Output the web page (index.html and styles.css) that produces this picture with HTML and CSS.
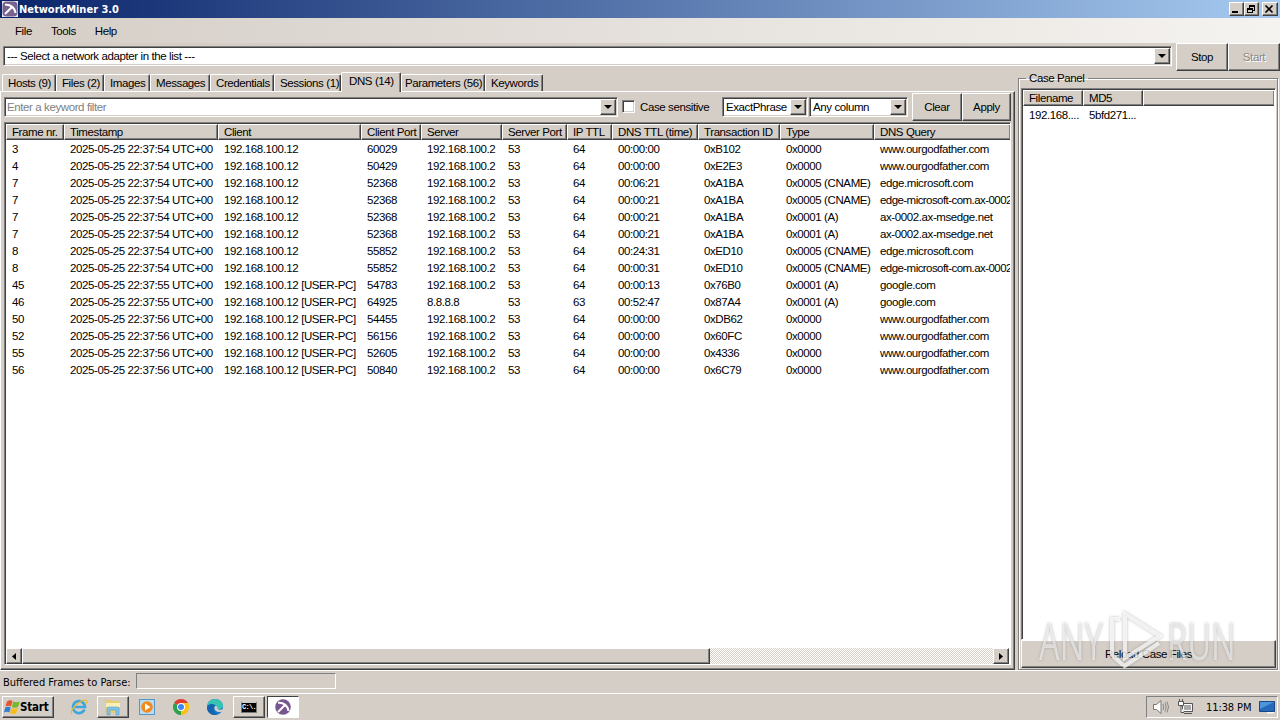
FILE: index.html
```
<!DOCTYPE html>
<html lang="en">
<head>
    <meta charset="UTF-8">
    <meta name="viewport" content="width=device-width, initial-scale=1.0">
    <title>NetworkMiner 3.0</title>
    <link rel="stylesheet" href="styles.css">
</head>
<body>
    <svg class="defs">
        <symbol id="miner" viewBox="0 0 16 16">
            <path d="M3 3.800C8 2.800 13 7 13.500 12" fill="none" stroke="#fff" stroke-width="2"/>
            <path d="M10.500 5.500L3 13" stroke="#fff" stroke-width="2"/>
        </symbol>
    </svg>
    <div class="titlebar">
        <svg class="app-icon" viewBox="0 0 16 16">
            <rect width="16" height="16" fill="#eeeaf4"/>
            <rect x=".5" y=".5" width="15" height="15" rx="4" fill="#77638f"/>
            <use href="#miner"/>
        </svg>
        <span class="title">NetworkMiner 3.0</span>
        <div class="window-buttons">
            <button><svg viewBox="0 0 12 10"><path d="M2 7h6v2H2z"/></svg></button>
            <button><svg viewBox="0 0 12 10"><path d="M4 1h6v6H8V6h1V3H5v1H4zM2 4h6v5H2zM3 6v2h4V6z" fill-rule="evenodd"/></svg></button>
            <button class="close"><svg viewBox="0 0 12 10"><path d="M2.500 1.500l7 7m0-7l-7 7" stroke="#000" stroke-width="1.700"/></svg></button>
        </div>
    </div>
    <div class="menubar">
        <span>File</span>
        <span>Tools</span>
        <span>Help</span>
    </div>
    <div class="adapter-row">
        <div class="combo"><span>--- Select a network adapter in the list ---</span><i class="drop"></i></div>
        <button class="btn">Stop</button>
        <button class="btn disabled">Start</button>
    </div>
    <div class="main">
        <div class="left">
            <div class="tabs">
                <div class="tab hosts">Hosts (9)</div>
                <div class="tab files">Files (2)</div>
                <div class="tab images">Images</div>
                <div class="tab messages">Messages</div>
                <div class="tab credentials">Credentials</div>
                <div class="tab sessions">Sessions (1)</div>
                <div class="tab dns active">DNS (14)</div>
                <div class="tab parameters">Parameters (56)</div>
                <div class="tab keywords">Keywords</div>
            </div>
            <div class="page">
                <div class="filter">
                    <div class="combo keyword"><span>Enter a keyword filter</span><i class="drop"></i></div>
                    <i class="checkbox"></i>
                    <span class="check-label">Case sensitive</span>
                    <div class="combo phrase"><span>ExactPhrase</span><i class="drop"></i></div>
                    <div class="combo column"><span>Any column</span><i class="drop"></i></div>
                    <button class="btn">Clear</button>
                    <button class="btn apply">Apply</button>
                </div>
                <div class="list">
                    <table>
                        <colgroup>
                            <col class="c-frame"><col class="c-time"><col class="c-client"><col class="c-cport">
                            <col class="c-server"><col class="c-sport"><col class="c-ttl"><col class="c-dnsttl">
                            <col class="c-trans"><col class="c-type"><col class="c-query">
                        </colgroup>
                        <thead>
                            <tr><th>Frame nr.</th><th>Timestamp</th><th>Client</th><th>Client Port</th><th>Server</th><th>Server Port</th><th>IP TTL</th><th>DNS TTL (time)</th><th>Transaction ID</th><th>Type</th><th>DNS Query</th></tr>
                        </thead>
                        <tbody id="rows"></tbody>
                    </table>
                    <div class="scrollbar">
                        <div class="arrow"><svg viewBox="0 0 4 7"><path d="M4 0v7L0 3.500z"/></svg></div>
                        <div class="thumb"></div>
                        <div class="track"></div>
                        <div class="arrow"><svg viewBox="0 0 4 7"><path d="M0 0v7l4-3.500z"/></svg></div>
                    </div>
                </div>
            </div>
        </div>
        <fieldset class="case-panel">
            <legend>Case Panel</legend>
            <div class="case-list">
                <div class="case-head"><span>Filename</span><span>MD5</span><span></span></div>
                <div class="case-row"><span>192.168....</span><span>5bfd271...</span></div>
            </div>
            <button class="btn reload">Reload Case Files</button>
        </fieldset>
        <div class="watermark">
            <span>ANY</span>
            <svg viewBox="0 0 62 64">
                <path d="M15 11H7v36l11 10M20 6v44l35-22zM18 59l36-24"/>
            </svg>
            <span>RUN</span>
        </div>
    </div>
    <div class="statusbar">
        <span>Buffered Frames to Parse:</span>
        <div class="progress"></div>
    </div>
    <div class="taskbar">
        <button class="start">
            <svg viewBox="0 0 16 16">
                <path d="M3 2.500q3-2 5.500-.5L7 7.500Q4.500 6 1.500 7.500z" fill="#e5562a"/>
                <path d="M9.300 2.500q3 1.500 6.500 0L14 8q-3 1.300-6.200 0z" fill="#76b82a"/>
                <path d="M1.200 8.500q3-1.500 5.500 0L5.300 13.500Q3 12 0 13.500z" fill="#2f7fd0"/>
                <path d="M7.500 9q3 1.500 6.200 0L12.200 14.500q-3 1.300-6.200-.2z" fill="#f6bd1b"/>
            </svg>
            <span>Start</span>
        </button>
        <div class="task ie">
            <svg viewBox="0 0 18 18">
                <path d="M14.500 11.500A6 6 0 1 1 15 9H5" fill="none" stroke="#3aa5df" stroke-width="2.600"/>
                <path d="M2 16C-1 12 12 0 16.500 2.500c1 .7.500 2-.5 3.500" fill="none" stroke="#e8b83a" stroke-width="1.200"/>
            </svg>
        </div>
        <div class="task raised">
            <svg viewBox="0 0 18 18">
                <path d="M1 2h6l1 1h8v12H1z" fill="#e9cd72"/>
                <path d="M2 5h14v4H2z" fill="#fbf0b6"/>
                <path d="M3 17V11q0-2 2-2h8q2 0 2 2v6h-3v-5H6v5z" fill="#7fc3ea" stroke="#559dc9" stroke-width=".6"/>
            </svg>
        </div>
        <div class="task">
            <svg viewBox="0 0 18 18">
                <rect x="1.500" y="1.500" width="15" height="15" fill="#b8dcf2" stroke="#5797c8"/>
                <circle cx="9" cy="9" r="5.800" fill="#f28a1c"/>
                <path d="M7 5.500v7L12.500 9z" fill="#fff"/>
            </svg>
        </div>
        <div class="task">
            <svg viewBox="0 0 18 18">
                <path d="M9 9L2.070 5A8 8 0 0 1 15.930 5z" fill="#e33b2e"/>
                <path d="M9 9l6.930-4A8 8 0 0 1 9 17z" fill="#fbc116"/>
                <path d="M9 9v8A8 8 0 0 1 2.070 5z" fill="#2da14c"/>
                <path d="M9 5h7A8 8 0 0 1 9 17l3.500-6z" fill="#fbc116"/>
                <circle cx="9" cy="9" r="4" fill="#fff"/>
                <circle cx="9" cy="9" r="3" fill="#4285f4"/>
            </svg>
        </div>
        <div class="task">
            <svg viewBox="0 0 18 18">
                <circle cx="9" cy="9" r="8" fill="#1479c9"/>
                <path d="M1.200 8C2 3 5.500 1 9 1c5 0 8 3.500 8 6.500 0 3-3 4-5.500 3.500C11 6.500 5 4.500 1.200 8z" fill="#37c2b1"/>
                <path d="M8.500 8.500C7.500 12.500 11 15 15.500 13.700c1-.3 3-2.500 2-2.700-3 1-6.400.9-6-.7 0-2-1.500-2.800-3-1.800z" fill="#d5cec7"/>
                <path d="M1.200 8.500C4 5 8 5.500 9.500 8 6.500 8.500 6.500 13.500 11 16.700 4 18 .3 13 1.200 8.500z" fill="#1664b0"/>
            </svg>
        </div>
        <div class="task raised cmd"><span>C:\.</span></div>
        <div class="task pressed">
            <svg viewBox="0 0 16 16"><circle cx="8" cy="8" r="7.800" fill="#77568f"/><use href="#miner"/></svg>
        </div>
        <div class="tray">
            <svg class="speaker" viewBox="0 0 18 16">
                <path d="M1.500 5.500h3L9 1.500v13l-4.500-4h-3z" fill="#fff" stroke="#777"/>
                <path d="M11 5q1.500 3 0 6M13 3.500q2.500 4.500 0 9M15 2.500q3 5.500 0 11" fill="none" stroke="#888"/>
            </svg>
            <svg class="network" viewBox="0 0 17 16">
                <path d="M5.500 4.500h10v8h-10zM7 14.500h8" fill="#a9a9a9" stroke="#555"/>
                <path d="M6.500 5.500h8v6h-8z" fill="none" stroke="#fff"/>
                <path d="M1.500 2.500h5v4h-5zM4 7v6.500h3M2.500 0v2m3-2v2" fill="#fff" stroke="#555"/>
            </svg>
            <span>11:38 PM</span>
            <svg class="desktop" viewBox="0 0 16 14">
                <path d="M.5 1.500h15v10H.5z" fill="#2768bb" stroke="#164889"/>
                <path d="M1 2h14L1 9z" fill="#4d94da"/>
                <path d="M8 12h7v1.500H8z" fill="#f4f7fa"/>
            </svg>
        </div>
    </div>
    <script>
        const frames = [
            ['3', '54', '', '60029', '192.168.100.2', '64', '00:00:00', '0xB102', '0x0000', 'www.ourgodfather.com'],
            ['4', '54', '', '50429', '192.168.100.2', '64', '00:00:00', '0xE2E3', '0x0000', 'www.ourgodfather.com'],
            ['7', '54', '', '52368', '192.168.100.2', '64', '00:06:21', '0xA1BA', '0x0005 (CNAME)', 'edge.microsoft.com'],
            ['7', '54', '', '52368', '192.168.100.2', '64', '00:00:21', '0xA1BA', '0x0005 (CNAME)', 'edge-microsoft-com.ax-0002'],
            ['7', '54', '', '52368', '192.168.100.2', '64', '00:00:21', '0xA1BA', '0x0001 (A)', 'ax-0002.ax-msedge.net'],
            ['7', '54', '', '52368', '192.168.100.2', '64', '00:00:21', '0xA1BA', '0x0001 (A)', 'ax-0002.ax-msedge.net'],
            ['8', '54', '', '55852', '192.168.100.2', '64', '00:24:31', '0xED10', '0x0005 (CNAME)', 'edge.microsoft.com'],
            ['8', '54', '', '55852', '192.168.100.2', '64', '00:00:31', '0xED10', '0x0005 (CNAME)', 'edge-microsoft-com.ax-0002'],
            ['45', '55', ' [USER-PC]', '54783', '192.168.100.2', '64', '00:00:13', '0x76B0', '0x0001 (A)', 'google.com'],
            ['46', '55', ' [USER-PC]', '64925', '8.8.8.8', '63', '00:52:47', '0x87A4', '0x0001 (A)', 'google.com'],
            ['50', '56', ' [USER-PC]', '54455', '192.168.100.2', '64', '00:00:00', '0xDB62', '0x0000', 'www.ourgodfather.com'],
            ['52', '56', ' [USER-PC]', '56156', '192.168.100.2', '64', '00:00:00', '0x60FC', '0x0000', 'www.ourgodfather.com'],
            ['55', '56', ' [USER-PC]', '52605', '192.168.100.2', '64', '00:00:00', '0x4336', '0x0000', 'www.ourgodfather.com'],
            ['56', '56', ' [USER-PC]', '50840', '192.168.100.2', '64', '00:00:00', '0x6C79', '0x0000', 'www.ourgodfather.com']
        ];

        document.getElementById('rows').innerHTML = frames.map(([nr, sec, host, port, server, ...rest]) => {
            const cells = [nr, `2025-05-25 22:37:${sec} UTC+00`, '192.168.100.12' + host, port, server, '53', ...rest];
            return '<tr>' + cells.map(cell => `<td${cell.startsWith('edge-') ? ' class="tight"' : ''}>${cell}</td>`).join('') + '</tr>';
        }).join('');
    </script>
</body>
</html>
```
FILE: styles.css
```
* {
    box-sizing: border-box;
}
body {
    margin: 0;
    width: 1280px;
    height: 720px;
    overflow: hidden;
    display: flex;
    flex-direction: column;
    background: #d5cec7;
    color: #000;
    font-family: "Liberation Sans", Arial, sans-serif;
    font-size: 11.5px;
    letter-spacing: -0.4px;
    line-height: 17px;
    white-space: nowrap;
}
button {
    font: inherit;
    letter-spacing: inherit;
    color: inherit;
    padding: 0;
    margin: 0;
}
.defs {
    position: absolute;
    width: 0;
    height: 0;
}
.titlebar {
    height: 18px;
    flex: none;
    display: flex;
    align-items: center;
    padding: 0 2px;
    background: linear-gradient(90deg, #0a246a, #a6caf0);
}
.app-icon {
    width: 16px;
    height: 16px;
}
.title {
    flex: 1;
    margin-left: 1px;
    color: #fff;
    font: bold 11px "DejaVu Sans Condensed", "DejaVu Sans", sans-serif;
    letter-spacing: 0;
}
.window-buttons {
    display: flex;
}
.window-buttons button {
    width: 15px;
    height: 14px;
    background: #d5cec7;
    border: 1px solid;
    border-color: #fff #404040 #404040 #fff;
    box-shadow: inset -1px -1px #808080;
    display: flex;
}
.window-buttons .close {
    width: 16px;
    margin-left: 3px;
}
.window-buttons svg {
    width: 12px;
    height: 10px;
    margin: 1px 0 0;
}
.menubar {
    height: 25px;
    flex: none;
    display: flex;
    gap: 19px;
    padding: 5px 0 0 15px;
    background: linear-gradient(90deg, #d5cec7, #f5f3f0);
}
.adapter-row {
    height: 28px;
    flex: none;
    display: flex;
    padding-left: 3px;
}
.adapter-row .combo {
    width: 1169px;
    margin: 3px 4px 0 0;
}
.adapter-row .btn {
    width: 52px;
}
.combo {
    height: 20px;
    background: #fff;
    border: 1px solid;
    border-color: #808080 #fff #fff #808080;
    box-shadow: inset 1px 1px #404040, inset -1px -1px #d5cec7;
    display: flex;
    padding: 1px;
    flex: none;
}
.combo span {
    flex: 1;
    padding-left: 2px;
    line-height: 17px;
}
.drop {
    width: 16px;
    height: 16px;
    background: #d5cec7;
    border: 1px solid;
    border-color: #fff #404040 #404040 #fff;
    box-shadow: inset -1px -1px #808080;
    display: flex;
    justify-content: center;
    align-items: center;
}
.drop::after {
    content: "";
    border: 4px solid transparent;
    border-top-color: #000;
    border-bottom: 0;
}
.btn {
    height: 28px;
    flex: none;
    background: #d5cec7;
    border: 1px solid;
    border-color: #fff #404040 #404040 #fff;
    box-shadow: inset -1px -1px #808080;
}
.disabled {
    color: #8e8984;
    text-shadow: 1px 1px #fff;
}
.main {
    position: relative;
    height: 599px;
    flex: none;
    display: flex;
}
.left {
    width: 1015px;
    flex: none;
    display: flex;
    flex-direction: column;
    margin-right: 3px;
}
.tabs {
    height: 20px;
    flex: none;
    display: flex;
    align-items: flex-end;
    padding-left: 2px;
}
.tab {
    height: 17px;
    border: 1px solid;
    border-width: 1px 1px 0;
    border-color: #fff #404040 #fff #fff;
    box-shadow: inset -1px 0 #808080;
    border-radius: 2px 2px 0 0;
    padding-left: 5px;
}
.hosts { width: 54px; }
.files { width: 48px; }
.images { width: 46px; }
.messages { width: 60px; }
.credentials { width: 64px; }
.sessions { width: 67px; }
.dns { width: 60px; }
.parameters { width: 84px; }
.keywords { width: 58px; }
.tab.parameters {
    padding-left: 3px;
}
.tab.active {
    height: 20px;
    margin-bottom: -1px;
    background: #d5cec7;
    padding-left: 7px;
    z-index: 1;
}
.page {
    flex: 1;
    display: flex;
    flex-direction: column;
    border: 1px solid;
    border-color: #fff #404040 #404040 #fff;
    box-shadow: inset -1px -1px #808080;
    padding: 0 3px 4px;
}
.filter {
    height: 30px;
    flex: none;
    display: flex;
    padding-top: 1px;
}
.filter .combo {
    margin-top: 4px;
}
.keyword {
    width: 614px;
    color: #808080;
}
.combo.keyword span {
    padding-left: 1px;
}
.checkbox {
    width: 13px;
    height: 13px;
    margin: 7px 5px 0 4px;
    background: #fff;
    border: 1px solid;
    border-color: #808080 #fff #fff #808080;
    box-shadow: inset 1px 1px #404040, inset -1px -1px #d5cec7;
}
.check-label {
    width: 82px;
    padding-top: 6px;
}
.phrase {
    width: 86px;
    margin-right: 1px;
}
.column {
    width: 99px;
    margin-right: 4px;
}
.filter .btn {
    width: 50px;
}
.filter .apply {
    width: 49px;
}
.list {
    flex: 1;
    display: flex;
    flex-direction: column;
    justify-content: space-between;
    overflow: hidden;
    background: #fff;
    border: 1px solid;
    border-color: #808080 #fff #fff #808080;
    box-shadow: inset 1px 1px #404040;
    padding: 1px 1px 0;
}
table {
    width: 1005px;
    table-layout: fixed;
    border-collapse: separate;
    border-spacing: 0;
}
th, td {
    padding: 0 0 0 6px;
    text-align: left;
    font-weight: normal;
    overflow: hidden;
}
th {
    height: 16px;
    line-height: 14px;
    background: #d5cec7;
    border: 1px solid;
    border-color: #fff #404040 #404040 #fff;
    box-shadow: inset -1px -1px #808080;
    padding-left: 5px;
}
td {
    height: 17px;
    line-height: 17px;
}
tbody tr:first-child td {
    height: 18px;
    padding-top: 1px;
}
.tight {
    letter-spacing: -0.56px;
}
.c-frame { width: 58px; }
.c-time { width: 154px; }
.c-client { width: 143px; }
.c-cport { width: 60px; }
.c-server { width: 81px; }
.c-sport { width: 65px; }
.c-ttl { width: 45px; }
.c-dnsttl { width: 86px; }
.c-trans { width: 82px; }
.c-type { width: 94px; }
.scrollbar {
    height: 16px;
    display: flex;
}
.arrow {
    width: 16px;
    display: flex;
    justify-content: center;
    align-items: center;
}
.arrow svg {
    width: 4px;
    height: 7px;
}
.arrow, .thumb {
    background: #d5cec7;
    border: 1px solid;
    border-color: #fff #404040 #404040 #fff;
    box-shadow: inset -1px -1px #808080;
}
.thumb {
    width: 688px;
}
.track {
    flex: 1;
    background: repeating-conic-gradient(#d5cec7 0 25%, #fff 0 50%) 0 0 / 2px 2px;
}
.case-panel {
    width: 260px;
    min-width: 0;
    margin: 0;
    padding: 3px 1px 1px 2px;
    border: 1px solid #808080;
    box-shadow: 1px 1px #fff, inset 1px 1px #fff;
    display: flex;
    flex-direction: column;
}
.case-panel legend {
    margin-left: 5px;
    padding: 0 4px 0 3px;
    height: 14px;
    line-height: 14px;
}
.case-list {
    flex: 1;
    background: #fff;
    border: 1px solid;
    border-color: #808080 #fff #fff #808080;
    box-shadow: inset 1px 1px #404040;
    padding: 1px;
}
.case-head, .case-row {
    display: flex;
}
.case-head span, .case-row span {
    width: 60px;
    height: 17px;
    padding-left: 6px;
}
.case-head span {
    height: 16px;
    background: #d5cec7;
    border: 1px solid;
    border-color: #fff #404040 #404040 #fff;
    box-shadow: inset -1px -1px #808080;
    padding-left: 5px;
    line-height: 15px;
}
.case-head span:last-child {
    flex: 1;
    border-right: 0;
}
.case-row {
    padding-top: 1px;
}
.watermark {
    position: absolute;
    left: 1039px;
    top: 537px;
    display: flex;
    align-items: center;
    height: 64px;
    font: 52px/64px "Open Sans", sans-serif;
    letter-spacing: 0;
    color: rgba(255, 255, 255, 0.6);
    text-shadow: 0 0 3px rgba(110, 110, 110, 0.5);
}
.watermark span {
    width: 66px;
    transform: scaleX(0.63);
    transform-origin: 0 50%;
}
.watermark svg {
    width: 62px;
    height: 64px;
    fill: none;
    stroke: rgba(255, 255, 255, 0.75);
    stroke-width: 4;
    filter: drop-shadow(0 0 1.5px rgba(110, 110, 110, 0.6));
}
.statusbar {
    height: 23px;
    flex: none;
    border-top: 1px solid #fff;
    display: flex;
    padding: 2px 3px;
    font: 11px/19px "DejaVu Sans Condensed", "DejaVu Sans", sans-serif;
    letter-spacing: 0;
}
.statusbar span {
    width: 133px;
}
.progress {
    width: 200px;
    height: 16px;
    border: 1px solid;
    border-color: #808080 #fff #fff #808080;
}
.taskbar {
    height: 27px;
    flex: none;
    border-top: 1px solid #fff;
    display: flex;
    padding: 2px 2px 2px;
}
.start {
    width: 52px;
    height: 22px;
    background: #d5cec7;
    border: 1px solid;
    border-color: #fff #404040 #404040 #fff;
    box-shadow: inset -1px -1px #808080;
    display: flex;
    align-items: center;
    font: bold 11.5px "DejaVu Sans Condensed", "DejaVu Sans", sans-serif;
    letter-spacing: -0.2px;
    margin-right: 9px;
}
.start svg {
    width: 16px;
    height: 16px;
    margin-left: 1px;
}
.task {
    width: 32px;
    height: 22px;
    margin-right: 2px;
    display: flex;
    align-items: center;
    justify-content: center;
}
.task svg {
    width: 18px;
    height: 18px;
}
.raised {
    border: 1px solid;
    border-color: #fff #404040 #404040 #fff;
    box-shadow: inset -1px -1px #808080;
}
.pressed {
    background: #fff;
    border: 1px solid;
    border-color: #404040 #fff #fff #404040;
}
.pressed svg {
    width: 16px;
    height: 16px;
}
.cmd span {
    width: 16px;
    height: 12px;
    border: 1px solid #777;
    border-top: 2px solid #ccc;
    background: #000;
    color: #fff;
    font: bold 7px/8px "Liberation Mono", monospace;
    letter-spacing: -0.7px;
}
.tray {
    width: 132px;
    height: 22px;
    margin-left: auto;
    border: 1px solid;
    border-color: #808080 #fff #fff #808080;
    display: flex;
    align-items: center;
    padding-left: 5px;
}
.speaker {
    width: 18px;
    height: 16px;
    margin-right: 7px;
}
.network {
    width: 17px;
    height: 16px;
    margin-right: 12px;
}
.tray span {
    width: 53px;
    font: 11px "DejaVu Sans Condensed", "DejaVu Sans", sans-serif;
    letter-spacing: -0.1px;
}
.desktop {
    width: 16px;
    height: 14px;
}
```
